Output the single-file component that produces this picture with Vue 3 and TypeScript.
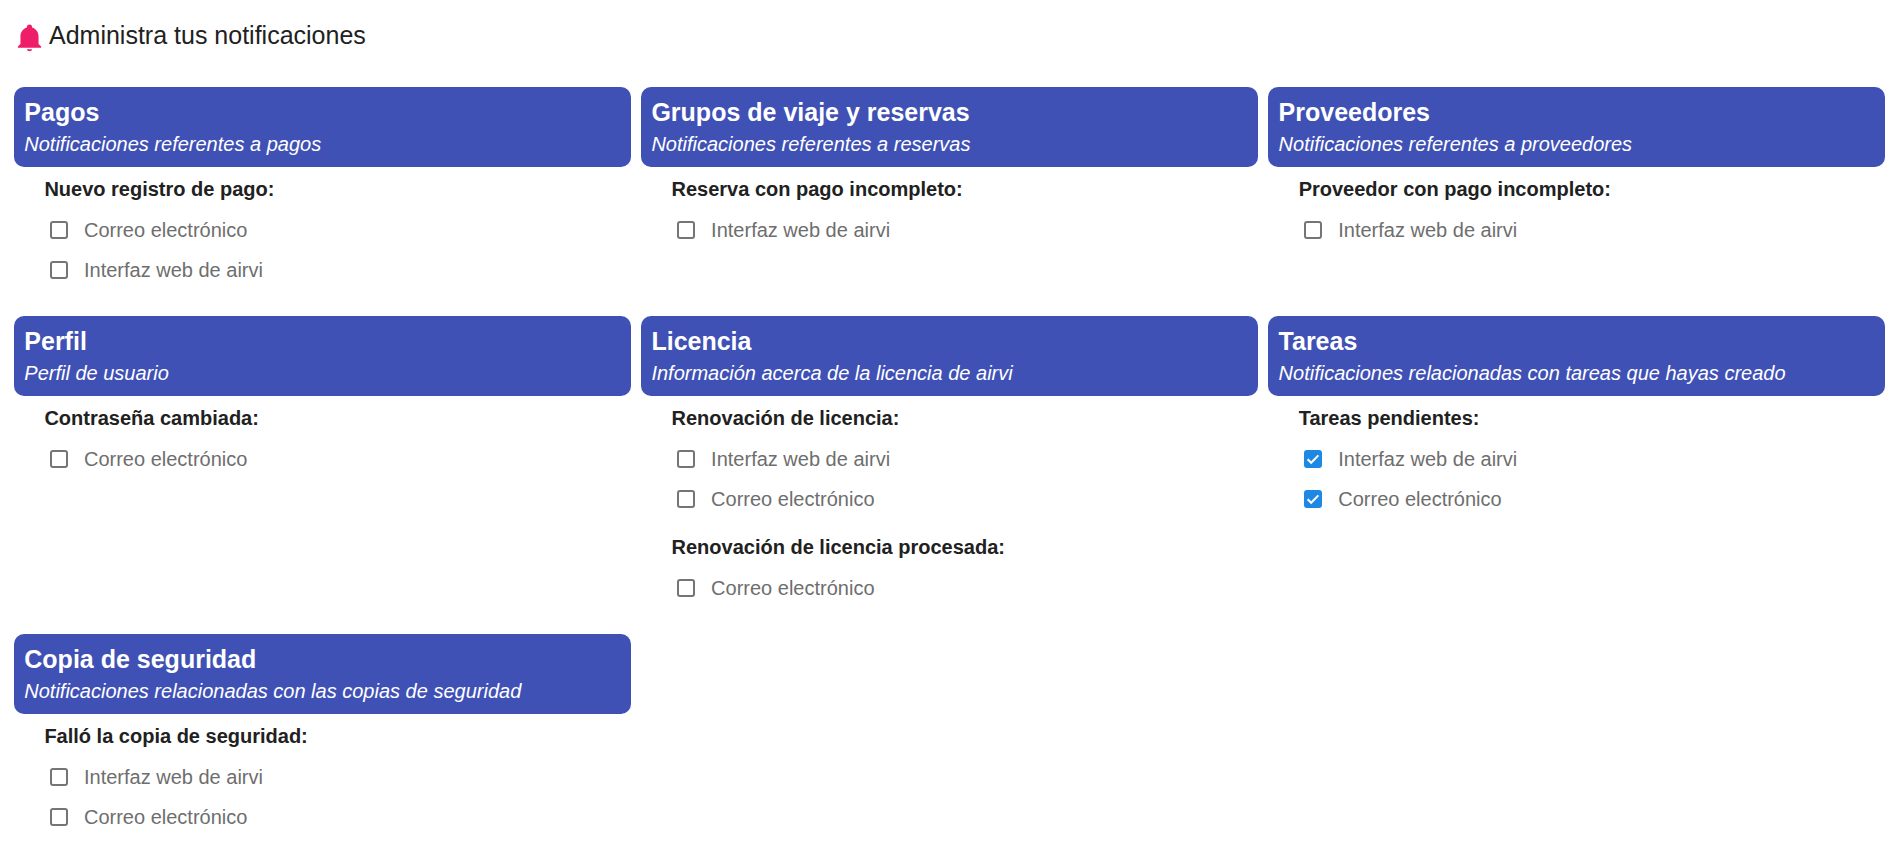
<script setup lang="ts">
interface Option { label: string; checked?: boolean }
interface Group { label: string; options: Option[] }
interface Section { title: string; subtitle: string; groups: Group[] }
const web = 'Interfaz web de airvi'
const mail = 'Correo electrónico'
const rows: Section[][] = [
  [
    { title: 'Pagos', subtitle: 'Notificaciones referentes a pagos', groups: [{ label: 'Nuevo registro de pago:', options: [{ label: mail }, { label: web }] }] },
    { title: 'Grupos de viaje y reservas', subtitle: 'Notificaciones referentes a reservas', groups: [{ label: 'Reserva con pago incompleto:', options: [{ label: web }] }] },
    { title: 'Proveedores', subtitle: 'Notificaciones referentes a proveedores', groups: [{ label: 'Proveedor con pago incompleto:', options: [{ label: web }] }] },
  ],
  [
    { title: 'Perfil', subtitle: 'Perfil de usuario', groups: [{ label: 'Contraseña cambiada:', options: [{ label: mail }] }] },
    { title: 'Licencia', subtitle: 'Información acerca de la licencia de airvi', groups: [
      { label: 'Renovación de licencia:', options: [{ label: web }, { label: mail }] },
      { label: 'Renovación de licencia procesada:', options: [{ label: mail }] },
    ] },
    { title: 'Tareas', subtitle: 'Notificaciones relacionadas con tareas que hayas creado', groups: [{ label: 'Tareas pendientes:', options: [{ label: web, checked: true }, { label: mail, checked: true }] }] },
  ],
  [
    { title: 'Copia de seguridad', subtitle: 'Notificaciones relacionadas con las copias de seguridad', groups: [{ label: 'Falló la copia de seguridad:', options: [{ label: web }, { label: mail }] }] },
  ],
]
const sections = rows.flat()
</script>

<template>
  <div class="page">
    <h1 class="heading">
      <svg class="bell" viewBox="0 0 24 24" aria-hidden="true"><path d="M21,19V20H3V19L5,17V11C5,7.9 7.03,5.17 10,4.29C10,4.19 10,4.1 10,4A2,2 0 0,1 12,2A2,2 0 0,1 14,4C14,4.1 14,4.19 14,4.29C16.97,5.17 19,7.9 19,11V17L21,19M14,21A2,1.6 0 0,1 12,22.6A2,1.6 0 0,1 10,21" /></svg>
      <span>Administra tus notificaciones</span>
    </h1>
    <div class="grid">
      <section v-for="s in sections" :key="s.title" class="section">
        <header class="head">
          <div class="title">{{ s.title }}</div>
          <div class="subtitle">{{ s.subtitle }}</div>
        </header>
        <div v-for="g in s.groups" :key="g.label" class="group">
          <div class="group-label">{{ g.label }}</div>
          <div class="options">
            <label v-for="o in g.options" :key="o.label" class="option">
              <span class="box" :class="{ checked: o.checked }">
                <svg v-if="o.checked" viewBox="0 0 18 18" aria-hidden="true"><path d="M3.6 9.2l3.6 3.6 7.2-7.4" fill="none" stroke="#fff" stroke-width="2" /></svg>
              </span>
              <span class="option-text">{{ o.label }}</span>
            </label>
          </div>
        </div>
      </section>
    </div>
  </div>
</template>

<style>
html, body { margin: 0; background: #fff; }
</style>

<style scoped>
.page {
  font-family: "Liberation Sans", Arial, sans-serif;
  padding: 20px 8.6px 0 14px;
}
.heading {
  display: flex;
  align-items: center;
  margin: 0 0 32px;
  height: 35px;
  font-size: 25px;
  font-weight: 400;
  color: #212121;
}
.bell { width: 31px; height: 31px; fill: #ef1e68; margin-right: 4px; margin-bottom: 1px; flex: none; }
.heading span { position: relative; top: -2px; }
.grid {
  display: grid;
  grid-template-columns: repeat(3, 1fr);
  column-gap: 10px;
  row-gap: 26px;
  align-items: start;
}
.head {
  height: 80px;
  box-sizing: border-box;
  padding: 9px 10px 0 10.3px;
  background: #3f51b5;
  border-radius: 10px;
  color: #fff;
}
.title { font-size: 25px; font-weight: 700; line-height: 33px; }
.subtitle { font-size: 20px; font-style: italic; line-height: 31px; }
.group { padding-left: 30.4px; margin-top: 16px; }
.head + .group { margin-top: 10px; }
.group-label { font-size: 20px; font-weight: 700; line-height: 24px; color: #212121; margin-bottom: 9px; }
.option { display: flex; align-items: center; height: 40px; padding-left: 5.6px; }
.box {
  width: 18px;
  height: 18px;
  box-sizing: border-box;
  border: 2px solid #757575;
  border-radius: 3px;
  flex: none;
  display: block;
}
.box.checked { background: #1e88e5; border-color: #1e88e5; }
.box.checked svg { display: block; width: 18px; height: 18px; margin: -2px; }
.option-text { margin-left: 16px; font-size: 20px; color: #6e6e6e; }
</style>
